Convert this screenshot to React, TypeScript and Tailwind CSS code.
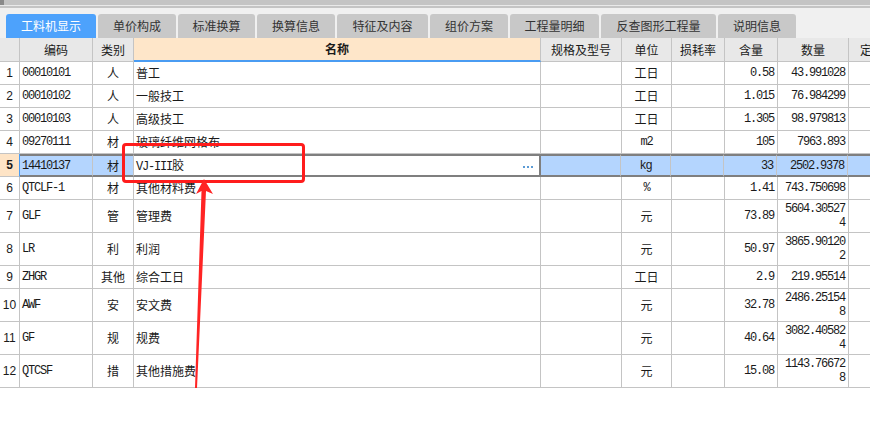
import React from 'react';

type Row = {
  n: number;
  code: string;
  type: string;
  name: string;
  unit: string;
  qty: string;
  amt: string[];
  tall?: boolean;
  selected?: boolean;
};

const rows: Row[] = [
  { n: 1, code: '00010101', type: '人', name: '普工', unit: '工日', qty: '0.58', amt: ['43.991028'] },
  { n: 2, code: '00010102', type: '人', name: '一般技工', unit: '工日', qty: '1.015', amt: ['76.984299'] },
  { n: 3, code: '00010103', type: '人', name: '高级技工', unit: '工日', qty: '1.305', amt: ['98.979813'] },
  { n: 4, code: '09270111', type: '材', name: '玻璃纤维网格布', unit: 'm2', qty: '105', amt: ['7963.893'] },
  { n: 5, code: '14410137', type: '材', name: 'VJ-III胶', unit: 'kg', qty: '33', amt: ['2502.9378'], selected: true },
  { n: 6, code: 'QTCLF-1', type: '材', name: '其他材料费', unit: '%', qty: '1.41', amt: ['743.750698'] },
  { n: 7, code: 'GLF', type: '管', name: '管理费', unit: '元', qty: '73.89', amt: ['5604.30527', '4'], tall: true },
  { n: 8, code: 'LR', type: '利', name: '利润', unit: '元', qty: '50.97', amt: ['3865.90120', '2'], tall: true },
  { n: 9, code: 'ZHGR', type: '其他', name: '综合工日', unit: '工日', qty: '2.9', amt: ['219.95514'] },
  { n: 10, code: 'AWF', type: '安', name: '安文费', unit: '元', qty: '32.78', amt: ['2486.25154', '8'], tall: true },
  { n: 11, code: 'GF', type: '规', name: '规费', unit: '元', qty: '40.64', amt: ['3082.40582', '4'], tall: true },
  { n: 12, code: 'QTCSF', type: '措', name: '其他措施费', unit: '元', qty: '15.08', amt: ['1143.76672', '8'], tall: true },
];

const tabs = [
  { label: '工料机显示', w: 'w-[90px]' },
  { label: '单价构成', w: 'w-[78px]' },
  { label: '标准换算', w: 'w-[77px]' },
  { label: '换算信息', w: 'w-[78px]' },
  { label: '特征及内容', w: 'w-[91px]' },
  { label: '组价方案', w: 'w-[78px]' },
  { label: '工程量明细', w: 'w-[89px]' },
  { label: '反查图形工程量', w: 'w-[115px]' },
  { label: '说明信息', w: 'w-[78px]' },
];

const cjk = "font-['Noto_Sans_CJK_SC','Noto_Sans',sans-serif]";
const mono = "font-['Liberation_Mono','Noto_Sans_CJK_SC',monospace] text-[12px] tracking-[-1.2px]";

export default function App() {
  return (
    <div className={`relative w-[870px] h-[432px] overflow-hidden bg-white text-[12px] text-[#1a1a1a] ${cjk}`}>
      {/* top scrollbar strip */}
      <div className="h-[14px] bg-[#f0f0f0]">
        <div className="flex h-[5px] bg-[#c4c4c4]">
          <div className="w-[4px] h-[5px] bg-[#8a8a8a]" />
        </div>
        <div className="h-px bg-[#e9e9e9]" />
        <div className="h-[2px] bg-[#c4c4c4]" />
      </div>

      {/* tabs */}
      <div className="flex gap-[2px] pl-[6px] bg-[#f0f0f0] h-[24px]">
        {tabs.map((t, i) => (
          <div
            key={t.label}
            className={`${t.w} h-[24px] flex items-center justify-center rounded-t-[3px] ${
              i === 0 ? 'bg-[#4da2fc] text-white' : 'bg-[#c8c8c8] text-[#333]'
            }`}
          >
            {t.label}
          </div>
        ))}
      </div>

      {/* header */}
      <div className="flex h-[24px] bg-[#e8e8e8] border-b border-[#c4c4c4] w-[930px]">
        <div className="w-[20px] shrink-0 border-r border-[#c4c4c4]" />
        <div className="w-[73px] shrink-0 border-r border-[#c4c4c4] flex items-center justify-center">编码</div>
        <div className="w-[41px] shrink-0 border-r border-[#c4c4c4] flex items-center justify-center">类别</div>
        <div className="w-[407px] shrink-0 border-r border-[#c4c4c4] bg-[#fee6c9] border-b-2 border-b-[#4a9cf2] -mb-px flex items-center justify-center font-bold">名称</div>
        <div className="w-[81px] shrink-0 border-r border-[#c4c4c4] flex items-center justify-center">规格及型号</div>
        <div className="w-[50px] shrink-0 border-r border-[#c4c4c4] flex items-center justify-center">单位</div>
        <div className="w-[53px] shrink-0 border-r border-[#c4c4c4] flex items-center justify-center">损耗率</div>
        <div className="w-[53px] shrink-0 border-r border-[#c4c4c4] flex items-center justify-center">含量</div>
        <div className="w-[71px] shrink-0 border-r border-[#c4c4c4] flex items-center justify-center">数量</div>
        <div className="w-[60px] shrink-0 flex items-center pl-[11px]">定额价</div>
      </div>

      {/* rows */}
      {rows.map((r) => {
        const sel = r.selected;
        const cell = sel
          ? 'border-r border-r-[#c4c4c4] border-y-2 border-y-[#7f7f7f] bg-[#b4d5fe]'
          : 'border-r border-[#c4c4c4] border-b';
        const isCjkUnit = /[\u4e00-\u9fff]/.test(r.unit);
        return (
          <div key={r.n} className={`flex w-[930px] ${r.tall ? 'h-[33px]' : 'h-[23px]'}`}>
            <div
              className={`w-[20px] shrink-0 flex items-center justify-center font-['Liberation_Sans',sans-serif] border-b border-[#c4c4c4] ${
                sel ? 'bg-[#fee4c6] font-bold border-r border-r-[#4a9cf2]' : 'border-r'
              }`}
            >
              {r.n}
            </div>
            <div className={`w-[73px] shrink-0 flex items-center pl-[2px] ${mono} ${cell}`}>{r.code}</div>
            <div className={`w-[41px] shrink-0 flex items-center justify-center ${cell}`}>{r.type}</div>
            <div
              className={`w-[407px] shrink-0 flex items-center pl-[2px] ${
                sel
                  ? 'bg-white border-y-2 border-y-[#7f7f7f] border-r-2 border-r-[#7f7f7f] justify-between pr-[6px]'
                  : 'border-r border-b border-[#c4c4c4]'
              }`}
            >
              <span>
                {sel ? (
                  <>
                    <span className={mono}>VJ-III</span>胶
                  </>
                ) : (
                  r.name
                )}
              </span>
              {sel && (
                <span className="flex gap-[2px] mt-[2px]">
                  <span className="w-[2px] h-[2px] bg-[#5b9bd5]" />
                  <span className="w-[2px] h-[2px] bg-[#5b9bd5]" />
                  <span className="w-[2px] h-[2px] bg-[#5b9bd5]" />
                </span>
              )}
            </div>
            <div className={`shrink-0 ${cell} ${sel ? 'w-[80px]' : 'w-[81px]'}`} />
            <div
              className={`w-[50px] shrink-0 flex items-center justify-center ${isCjkUnit ? '' : mono} ${cell}`}
            >
              {r.unit}
            </div>
            <div className={`w-[53px] shrink-0 ${cell}`} />
            <div className={`w-[53px] shrink-0 flex items-center justify-end pr-[3px] ${mono} ${cell}`}>{r.qty}</div>
            <div
              className={`w-[71px] shrink-0 flex flex-col justify-center items-end pr-[3px] leading-[14px] ${mono} ${cell}`}
            >
              {r.amt.map((a) => (
                <span key={a}>{a}</span>
              ))}
            </div>
            <div
              className={`w-[60px] shrink-0 ${
                sel ? 'bg-[#b4d5fe] border-y-2 border-y-[#7f7f7f]' : 'border-b border-[#c4c4c4]'
              }`}
            />
          </div>
        );
      })}

      {/* annotation: red box */}
      <div className="absolute left-[122px] top-[143px] w-[183px] h-[40px] border-[3px] border-[#ff1c1c] rounded-[4px] pointer-events-none" />

      {/* annotation: red arrow */}
      <svg className="absolute left-0 top-0 pointer-events-none" width="870" height="432" viewBox="0 0 870 432">
        <polygon
          points="204,179 213,194 206,191 197,388 195,388 201.5,191 196,194"
          fill="#ff2424"
        />
      </svg>
    </div>
  );
}
